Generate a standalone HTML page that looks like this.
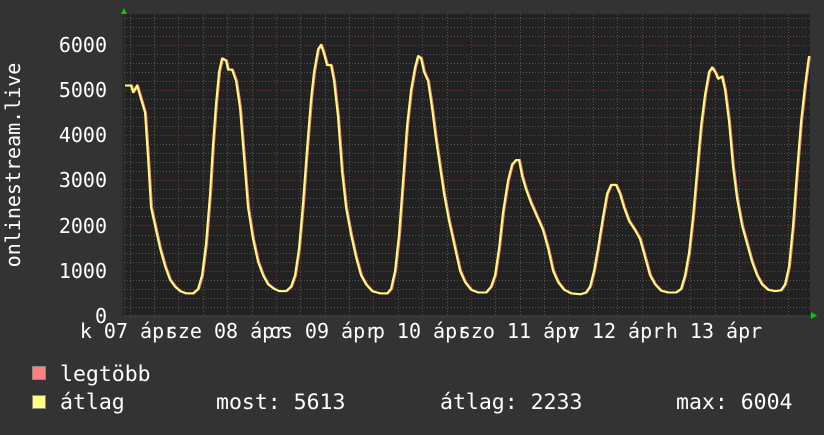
<!DOCTYPE html><html><head><meta charset="utf-8"><style>
body{margin:0;background:#333;width:824px;height:430px;overflow:hidden}
text{font-family:"DejaVu Sans Mono","Liberation Mono",monospace;font-size:20px;fill:#fff}
text.l{font-size:21.5px}
</style></head><body>
<svg width="824" height="430" xmlns="http://www.w3.org/2000/svg">
<rect x="0" y="0" width="824" height="430" fill="#333"/>
<rect x="124" y="14" width="686" height="302" fill="#222"/>
<rect x="122" y="14" width="4" height="302" fill="#2a2a2a"/>
<g stroke="#555" stroke-width="1" stroke-dasharray="1,2">
<path d="M124 307.5H810M124 298.5H810M124 289.5H810M124 280.5H810M124 262.5H810M124 253.5H810M124 244.5H810M124 235.5H810M124 216.5H810M124 207.5H810M124 198.5H810M124 189.5H810M124 171.5H810M124 162.5H810M124 153.5H810M124 144.5H810M124 126.5H810M124 117.5H810M124 108.5H810M124 99.5H810M124 81.5H810M124 72.5H810M124 63.5H810M124 54.5H810M124 36.5H810M124 27.5H810M124 18.5H810"/>
<path d="M130.5 14V316M154.5 14V316M203.5 14V316M227.5 14V316M252.5 14V316M300.5 14V316M325.5 14V316M349.5 14V316M398.5 14V316M422.5 14V316M447.5 14V316M495.5 14V316M520.5 14V316M544.5 14V316M593.5 14V316M617.5 14V316M642.5 14V316M690.5 14V316M715.5 14V316M739.5 14V316M788.5 14V316"/>
</g>
<g stroke="#7a3333" stroke-width="1" stroke-dasharray="1,2">
<path d="M124 271.5H810M124 225.5H810M124 180.5H810M124 135.5H810M124 90.5H810M124 45.5H810"/>
<path d="M178.5 14V316M276.5 14V316M373.5 14V316M471.5 14V316M568.5 14V316M666.5 14V316M764.5 14V316"/>
</g>
<polyline vector-effect="non-scaling-stroke" transform="translate(1,316) scale(1,-0.0452)" fill="none" stroke="#ff8080" stroke-width="2" stroke-linejoin="round" points="125,5100 131,5100 133,4950 137,5100 141,4800 145,4500 148,3500 151,2400 155,2000 160,1500 165,1100 170,800 175,650 180,550 186,500 193,500 198,600 202,900 206,1600 210,2700 213,3800 216,4700 219,5400 222,5700 226,5650 228,5450 232,5450 236,5200 240,4600 244,3500 248,2400 253,1700 258,1200 263,900 268,700 274,600 279,550 286,550 291,650 295,900 299,1500 303,2500 307,3700 311,4800 314,5400 318,5900 321,6000 324,5800 327,5550 331,5550 334,5200 338,4400 342,3200 346,2400 351,1800 356,1300 361,900 366,700 372,550 380,500 387,500 391,600 395,1000 399,1800 403,3000 407,4200 411,5000 415,5500 418,5750 421,5700 424,5400 428,5200 432,4600 436,3900 440,3300 444,2700 449,2100 455,1500 460,1000 465,750 471,580 478,520 486,520 491,650 495,900 499,1500 503,2300 508,3000 512,3350 516,3450 519,3450 522,3100 526,2800 531,2500 537,2200 543,1900 548,1500 553,1000 558,750 564,580 571,500 580,480 586,520 590,650 594,1000 598,1500 603,2200 607,2700 611,2900 616,2900 620,2700 624,2400 629,2100 635,1900 640,1700 645,1300 650,900 655,700 661,560 668,520 676,520 681,600 685,900 689,1400 693,2200 697,3200 701,4200 705,4900 709,5400 712,5500 715,5400 718,5250 722,5300 725,5000 729,4300 733,3300 737,2600 742,2000 747,1600 752,1200 757,900 762,700 768,580 775,550 781,570 785,700 789,1100 793,2000 797,3200 801,4300 805,5100 808,5600 809,5750"/>
<polyline vector-effect="non-scaling-stroke" transform="translate(0,316) scale(1,-0.0452)" fill="none" stroke="#ffff80" stroke-width="2" stroke-linejoin="round" points="125,5100 131,5100 133,4950 137,5100 141,4800 145,4500 148,3500 151,2400 155,2000 160,1500 165,1100 170,800 175,650 180,550 186,500 193,500 198,600 202,900 206,1600 210,2700 213,3800 216,4700 219,5400 222,5700 226,5650 228,5450 232,5450 236,5200 240,4600 244,3500 248,2400 253,1700 258,1200 263,900 268,700 274,600 279,550 286,550 291,650 295,900 299,1500 303,2500 307,3700 311,4800 314,5400 318,5900 321,6000 324,5800 327,5550 331,5550 334,5200 338,4400 342,3200 346,2400 351,1800 356,1300 361,900 366,700 372,550 380,500 387,500 391,600 395,1000 399,1800 403,3000 407,4200 411,5000 415,5500 418,5750 421,5700 424,5400 428,5200 432,4600 436,3900 440,3300 444,2700 449,2100 455,1500 460,1000 465,750 471,580 478,520 486,520 491,650 495,900 499,1500 503,2300 508,3000 512,3350 516,3450 519,3450 522,3100 526,2800 531,2500 537,2200 543,1900 548,1500 553,1000 558,750 564,580 571,500 580,480 586,520 590,650 594,1000 598,1500 603,2200 607,2700 611,2900 616,2900 620,2700 624,2400 629,2100 635,1900 640,1700 645,1300 650,900 655,700 661,560 668,520 676,520 681,600 685,900 689,1400 693,2200 697,3200 701,4200 705,4900 709,5400 712,5500 715,5400 718,5250 722,5300 725,5000 729,4300 733,3300 737,2600 742,2000 747,1600 752,1200 757,900 762,700 768,580 775,550 781,570 785,700 789,1100 793,2000 797,3200 801,4300 805,5100 808,5600 809,5750"/>
<path d="M124 316H812" stroke="#444" stroke-width="1"/>
<polygon points="121,14 127,14 124,8" fill="#0c0"/>
<polygon points="811,312 811,319 817,315.5" fill="#0c0"/>
<g text-anchor="end">
<text x="107" y="323">0</text><text x="107" y="278">1000</text><text x="107" y="233">2000</text>
<text x="107" y="187">3000</text><text x="107" y="142">4000</text><text x="107" y="97">5000</text><text x="107" y="52">6000</text>
</g>
<text transform="translate(20,165) rotate(-90)" text-anchor="middle">onlinestream.live</text>
<g text-anchor="middle">
<text x="128" y="338">k 07 ápr</text><text x="226" y="338">sze 08 ápr</text><text x="323" y="338">cs 09 ápr</text>
<text x="421" y="338">p 10 ápr</text><text x="519" y="338">szo 11 ápr</text><text x="616" y="338">v 12 ápr</text><text x="714" y="338">h 13 ápr</text>
</g>
<rect x="32.5" y="366.5" width="13" height="13" fill="#ff8080" stroke="#888"/>
<rect x="32.5" y="395.5" width="13" height="13" fill="#ffff80" stroke="#888"/>
<text class="l" x="60" y="381">legtöbb</text>
<text class="l" x="60" y="409">átlag</text>
<text class="l" x="216" y="409">most: 5613</text>
<text class="l" x="440" y="409">átlag: 2233</text>
<text class="l" x="676" y="409">max: 6004</text>
</svg>
</body></html>
